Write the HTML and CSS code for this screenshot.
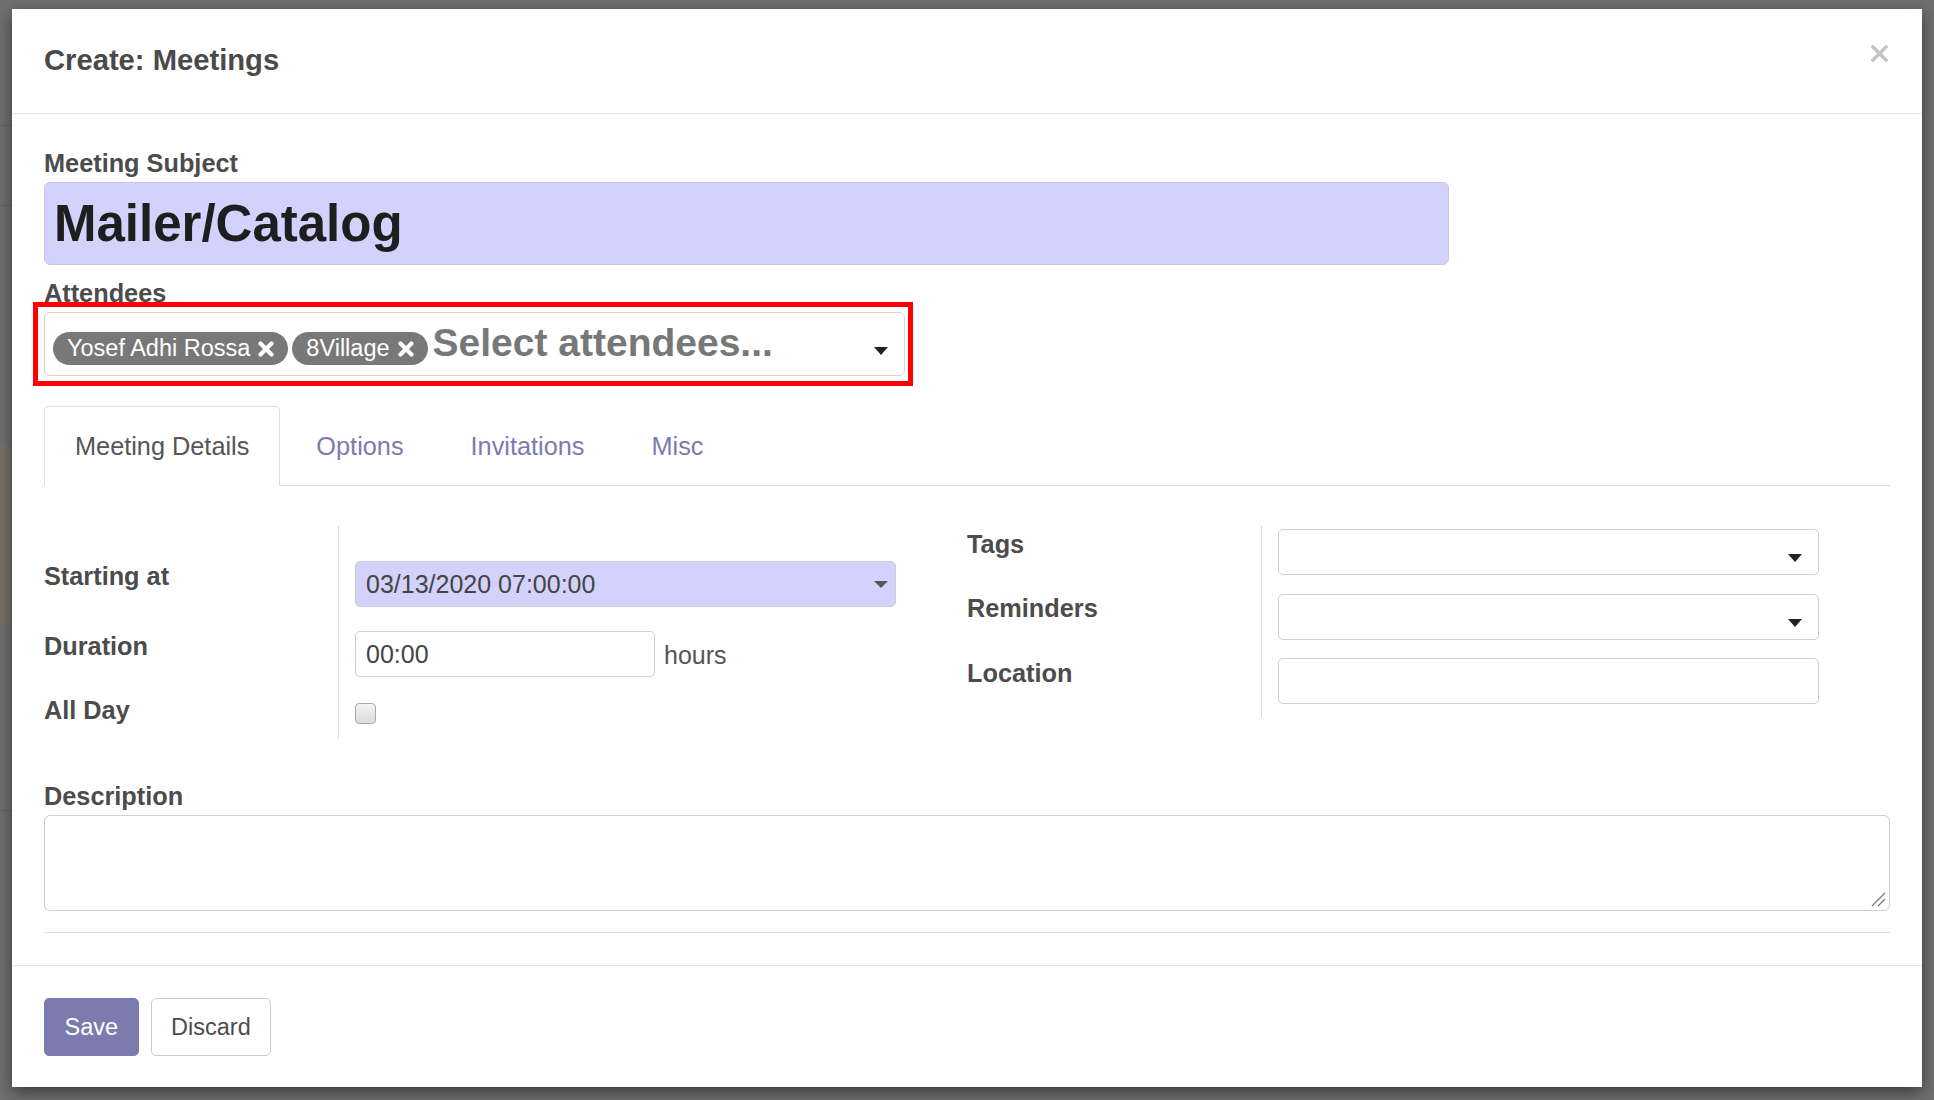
FILE: index.html
```html
<!DOCTYPE html>
<html lang="en">
<head>
<meta charset="utf-8">
<title>Create: Meetings</title>
<link rel="stylesheet" href="styles.css">
</head>
<body>
<div class="backdrop">
  <div class="modal">
    <header class="modal-header">
      <h4 class="modal-title">Create: Meetings</h4>
      <button class="close" type="button" aria-label="Close">
        <svg width="17" height="17" viewBox="0 0 17 17"><path d="M2 2 L15 15 M15 2 L2 15" stroke="#c4c4c4" stroke-width="3.4" stroke-linecap="square"/></svg>
      </button>
    </header>
    <main class="modal-body">
      <div class="field-label">Meeting Subject</div>
      <div class="subject-input">Mailer/Catalog</div>

      <div class="field-label attendees-label">Attendees</div>
      <div class="attendees-field">
        <span class="badge">Yosef Adhi Rossa<svg class="badge-x" width="18" height="16" viewBox="0 0 18 16"><path d="M3.5 2.5 L14.5 13.5 M14.5 2.5 L3.5 13.5" stroke="#fff" stroke-width="4.2" stroke-linecap="round"/></svg></span>
        <span class="badge">8Village<svg class="badge-x" width="18" height="16" viewBox="0 0 18 16"><path d="M3.5 2.5 L14.5 13.5 M14.5 2.5 L3.5 13.5" stroke="#fff" stroke-width="4.2" stroke-linecap="round"/></svg></span>
        <span class="placeholder">Select attendees...</span>
        <span class="caret caret-dark"></span>
        <div class="highlight"></div>
      </div>

      <ul class="tabs">
        <li class="tab active">Meeting Details</li>
        <li class="tab">Options</li>
        <li class="tab">Invitations</li>
        <li class="tab">Misc</li>
      </ul>

      <div class="tab-content">
        <div class="groups">
          <div class="group">
            <div class="row row-spacer"><div class="lbl"></div><div class="val"></div></div>
            <div class="row row-tall">
              <div class="lbl">Starting at</div>
              <div class="val">
                <div class="input input-date"><span>03/13/2020 07:00:00</span><span class="caret caret-grey"></span></div>
              </div>
            </div>
            <div class="row">
              <div class="lbl">Duration</div>
              <div class="val val-inline">
                <div class="input input-duration">00:00</div>
                <span class="unit">hours</span>
              </div>
            </div>
            <div class="row row-last">
              <div class="lbl">All Day</div>
              <div class="val val-check"><span class="checkbox"></span></div>
            </div>
          </div>
          <div class="group">
            <div class="row">
              <div class="lbl">Tags</div>
              <div class="val"><div class="input input-select"><span class="caret caret-dark"></span></div></div>
            </div>
            <div class="row">
              <div class="lbl">Reminders</div>
              <div class="val"><div class="input input-select"><span class="caret caret-dark"></span></div></div>
            </div>
            <div class="row row-end">
              <div class="lbl">Location</div>
              <div class="val"><div class="input"></div></div>
            </div>
          </div>
        </div>

        <div class="field-label desc-label">Description</div>
        <div class="textarea">
          <svg class="grip" width="15" height="15" viewBox="0 0 15 15"><path d="M1 14 L14 1 M7 14 L14 7" stroke="#777" stroke-width="1.2"/></svg>
        </div>
      </div>
      <div class="sep"></div>
    </main>
    <footer class="modal-footer">
      <button class="btn btn-primary" type="button">Save</button>
      <button class="btn btn-secondary" type="button">Discard</button>
    </footer>
  </div>
</div>
</body>
</html>
```

FILE: styles.css
```css
* { box-sizing: border-box; }
html, body { margin: 0; padding: 0; }
body {
  width: 1934px;
  height: 1100px;
  overflow: hidden;
  background: #707070;
  font-family: "Liberation Sans", Arial, sans-serif;
  color: #4c4c4c;
}
.backdrop {
  padding: 9px 0 0 12px;
  height: 1100px;
  background:
    linear-gradient(#656565, #656565) 0 125px / 12px 1px no-repeat,
    linear-gradient(#656565, #656565) 0 205px / 12px 1px no-repeat,
    linear-gradient(#777268, #777268) 0 445px / 12px 180px no-repeat,
    linear-gradient(#656565, #656565) 0 810px / 12px 1px no-repeat,
    #707070;
}
.modal {
  width: 1910px;
  background: #fff;
  box-shadow: 0 5px 15px rgba(0,0,0,0.5);
}

/* header */
.modal-header {
  height: 105px;
  border-bottom: 1px solid #e5e5e5;
  display: flex;
  justify-content: space-between;
  align-items: flex-start;
  padding: 33px 34px 0 32px;
}
.modal-title {
  margin: 0;
  font-size: 29.2px;
  line-height: 36px;
  font-weight: 700;
  color: #4a4a4a;
}
.close {
  margin-top: 3px;
  padding: 0;
  border: 0;
  background: none;
  width: 17px;
  height: 17px;
  display: block;
}
.close svg { display: block; }

/* body */
.modal-body {
  padding: 34px 32px 32px 32px;
}
.field-label {
  font-size: 25.3px;
  line-height: 30px;
  font-weight: 700;
  color: #4c4c4c;
  margin-bottom: 4px;
}
.subject-input {
  height: 83px;
  background: #d2d2fc;
  border: 1px solid #c8c8d8;
  border-radius: 6px;
  width: 1405px;
  padding: 0 9px;
  display: flex;
  align-items: center;
  font-size: 51px;
  font-weight: 700;
  color: #1e1e1e;
  line-height: 61px;
}
.attendees-label { margin-top: 13px; }

.attendees-field {
  position: relative;
  width: 861px;
  height: 64px;
  border: 1px solid #d4d4d4;
  border-radius: 6px;
  display: flex;
  align-items: flex-end;
  padding: 0 16px 10px 8px;
}
.badge {
  height: 33px;
  border-radius: 17px;
  background: #787878;
  color: #fff;
  font-size: 23.5px;
  line-height: 33px;
  padding: 0 13px 0 14px;
  margin-right: 4px;
  display: inline-flex;
  align-items: center;
  white-space: nowrap;
}
.badge-x { margin-left: 7px; display: block; }
.placeholder {
  margin-left: 1px;
  font-size: 39px;
  font-weight: 700;
  color: #777;
  line-height: 41px;
  margin-bottom: 2px;
  white-space: nowrap;
}
.caret {
  width: 0;
  height: 0;
  border-left: 7px solid transparent;
  border-right: 7px solid transparent;
}
.caret-dark { border-top: 8px solid #222; }
.caret-grey { border-top: 7px solid #555; }
.attendees-field .caret { margin-left: auto; margin-bottom: 10px; }
.highlight {
  position: absolute;
  left: -12px;
  top: -11px;
  right: -9px;
  bottom: -11px;
  border: 5px solid #ff0000;
  pointer-events: none;
}

/* tabs */
.tabs {
  list-style: none;
  margin: 30px 0 0 0;
  padding: 0;
  display: flex;
  border-bottom: 1px solid #dddddd;
}
.tab {
  font-size: 25.3px;
  line-height: 30px;
  padding: 24px 30px;
  margin-right: 5px;
  margin-bottom: -1px;
  border: 1px solid transparent;
  border-radius: 5px 5px 0 0;
  color: #7c7bad;
}
.tab.active {
  color: #555;
  border-color: #dddddd #dddddd #fff #dddddd;
  background: #fff;
}

/* groups */
.tab-content { padding-top: 40px; }
.groups {
  display: grid;
  grid-template-columns: 1fr 1fr;
  align-items: start;
}
.row {
  display: grid;
  grid-template-columns: 295px 1fr;
  height: 64.5px;
}
.row-spacer { height: 32px; }
.row-tall { height: 70px; }
.row-last { height: 46.5px; }
.row-end { height: 63px; }
.lbl {
  border-right: 1px solid #dddddd;
  font-size: 25.3px;
  line-height: 30px;
  font-weight: 700;
  color: #4c4c4c;
  padding-top: 2.5px;
}
.val { padding: 3px 0 0 16px; }
.val-inline { display: flex; align-items: flex-start; }
.val-check { padding-top: 10.5px; }
.input {
  width: 541px;
  height: 46px;
  border: 1px solid #cfcfcf;
  border-radius: 5px;
  background: #fff;
  font-size: 25px;
  color: #444;
  padding: 0 7px 0 10px;
  display: flex;
  align-items: center;
}
.input-date {
  background: #d2d2fc;
  justify-content: space-between;
}
.input-duration { width: 300px; }
.unit {
  font-size: 25px;
  color: #555;
  line-height: 46px;
  margin-left: 9px;
  padding-top: 1px;
}
.input-select {
  justify-content: flex-end;
  align-items: flex-end;
  padding: 0 16px 12px 10px;
}
.checkbox {
  display: block;
  width: 21px;
  height: 21px;
  border: 1px solid #a8a8a8;
  border-radius: 4px;
  background: linear-gradient(#f4f4f4, #dcdcdc);
}

/* description */
.desc-label { margin-top: 42px; }
.textarea {
  position: relative;
  height: 96px;
  border: 1px solid #cfcfcf;
  border-radius: 6px;
  display: flex;
  justify-content: flex-end;
  align-items: flex-end;
  padding: 0 3px 3px 0;
}
.grip { display: block; }
.sep {
  margin-top: 21px;
  border-top: 1px solid #dcdcdc;
}

/* footer */
.modal-footer {
  border-top: 1px solid #e5e5e5;
  padding: 32px 32px 31px 32px;
  display: flex;
  gap: 12px;
}
.btn {
  height: 58px;
  font-family: "Liberation Sans", Arial, sans-serif;
  font-size: 23.5px;
  border-radius: 5px;
  cursor: pointer;
}
.btn-primary {
  background: #7c7bad;
  border: 1px solid #7c7bad;
  color: #fff;
  padding: 0 19.5px;
}
.btn-secondary {
  background: #fff;
  border: 1px solid #cccccc;
  color: #4c4c4c;
  padding: 0 19.5px;
}
```
